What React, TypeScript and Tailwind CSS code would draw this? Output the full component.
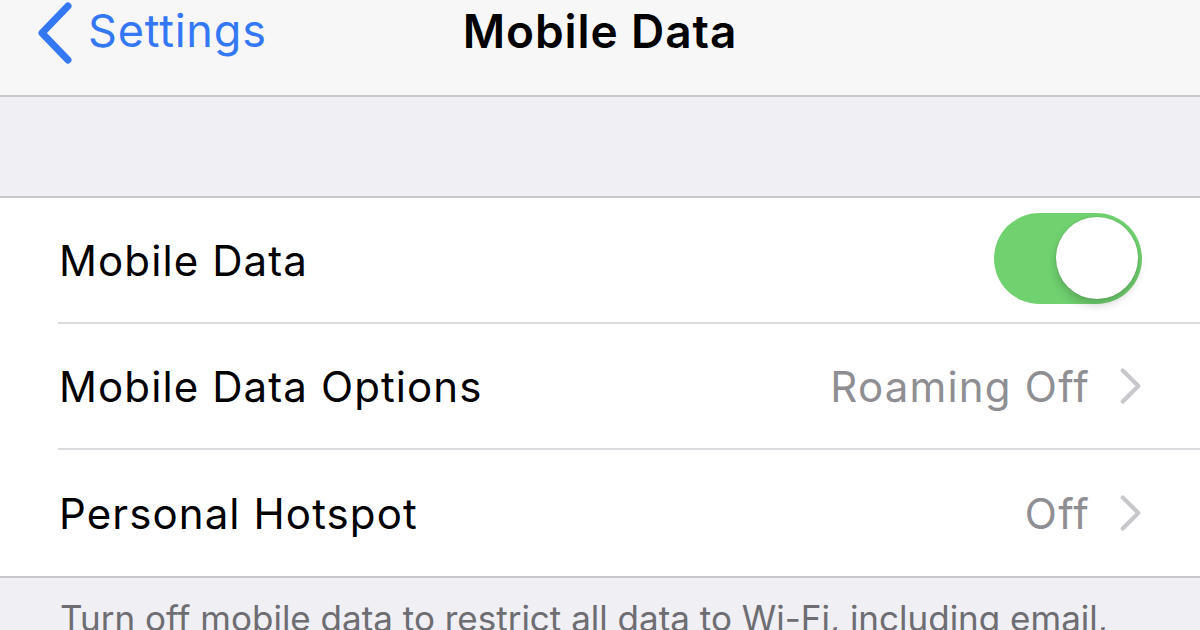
import React from "react";

const font = { fontFamily: "Inter, 'Noto Sans', sans-serif" };

function Chevron({ className }: { className?: string }) {
  return (
    <svg viewBox="0 0 24 40" className={className} fill="none">
      <path d="M3 3 L20 20 L3 37" stroke="currentColor" strokeWidth="4.5" strokeLinecap="round" strokeLinejoin="round" />
    </svg>
  );
}

function Toggle() {
  return (
    <div className="relative w-[148px] h-[91px] -mt-[3px] rounded-full bg-[#70d16f]">
      <div className="absolute right-[4px] top-[4px] w-[82px] h-[82px] rounded-full bg-white shadow-[0_6px_10px_rgba(0,0,0,0.18),0_0_2px_rgba(0,0,0,0.15)]" />
    </div>
  );
}

function Row({
  label,
  value,
  right,
  last,
}: {
  label: string;
  value?: string;
  right?: React.ReactNode;
  last?: boolean;
}) {
  return (
    <div className="pl-[58px]">
      <div
        className={
          "h-[126px] flex items-center pr-[58px] " +
          (last ? "" : "border-b-2 border-[#dcdce0]")
        }
      >
        <span className="pl-[1px] text-[42px] text-black tracking-[1.1px]">{label}</span>
        <div className="ml-auto flex items-center">
          {value && (
            <span className="text-[42px] text-[#8e8e93] tracking-[1.2px]">{value}</span>
          )}
          {right ?? <Chevron className="ml-[30px] w-[22px] h-[40px] text-[#c7c7cc]" />}
        </div>
      </div>
    </div>
  );
}

export default function App() {
  return (
    <div className="w-[1200px] h-[630px] overflow-hidden bg-[#efeff4]" style={font}>
      <div className="h-[97px] bg-[#f7f7f8] border-b-2 border-[#c8c7cc] relative flex items-start">
        <div className="flex items-start pl-[37px] pt-[2px] text-[#3478f6]">
          <svg viewBox="0 0 36 62" className="w-[36px] h-[62px]" fill="none">
            <path d="M31 4 L5 31 L31 58" stroke="currentColor" strokeWidth="7" strokeLinecap="round" strokeLinejoin="round" />
          </svg>
          <span className="ml-[15px] text-[45px] leading-[58px] tracking-[0.8px]">Settings</span>
        </div>
        <div className="absolute inset-x-0 top-[2px] flex justify-center pointer-events-none">
          <span className="text-[46px] leading-[58px] font-semibold text-black tracking-[0.9px]">Mobile Data</span>
        </div>
      </div>
      <div className="h-[99px]" />
      <div className="bg-white border-y-2 border-[#c8c7cc]">
        <Row label="Mobile Data" right={<Toggle />} />
        <Row label="Mobile Data Options" value="Roaming Off" />
        <Row label="Personal Hotspot" value="Off" last />
      </div>
      <p className="pl-[60px] pt-[14px] text-[35px] text-[#6d6d72] whitespace-nowrap">
        Turn off mobile data to restrict all data to Wi-Fi, including email,
      </p>
    </div>
  );
}
